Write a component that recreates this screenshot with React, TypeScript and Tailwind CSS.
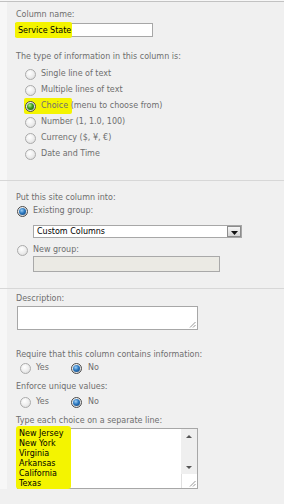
import React from "react";

function Radio({ state = "off" }: { state?: "off" | "blue" | "green" }) {
  if (state === "off") {
    return (
      <span className="inline-block w-[11px] h-[11px] rounded-full border border-[#ababab] bg-[radial-gradient(circle_at_40%_35%,#ffffff_0%,#eeeeee_50%,#d6d6d6_100%)] shrink-0" />
    );
  }
  const inner =
    state === "blue"
      ? "bg-[radial-gradient(circle_at_40%_35%,#9fd0f5_0%,#2b78c0_45%,#0d3a6b_100%)]"
      : "bg-[radial-gradient(circle_at_40%_35%,#b6f08a_0%,#3a9a20_45%,#135008_100%)]";
  return (
    <span className="inline-flex items-center justify-center w-[11px] h-[11px] rounded-full border border-[#4a4a4a] bg-[radial-gradient(circle_at_40%_35%,#ffffff_0%,#e4e4e4_60%,#bdbdbd_100%)] shrink-0">
      <span className={"block w-[7px] h-[7px] rounded-full " + inner} />
    </span>
  );
}

function Grip() {
  return (
    <svg width="7" height="7" viewBox="0 0 7 7" className="absolute right-[1px] bottom-[1px]">
      <line x1="6.5" y1="1" x2="1" y2="6.5" stroke="#8a8a8a" strokeWidth="0.9" />
      <line x1="6.5" y1="4" x2="4" y2="6.5" stroke="#8a8a8a" strokeWidth="0.9" />
    </svg>
  );
}

export default function App() {
  return (
    <div className="w-[284px] h-[504px] bg-[#f0f0f0] overflow-hidden font-['DejaVu_Sans',_Verdana,_sans-serif] text-[8px] leading-[10px] text-[#6e6e6e]">
      <div className="h-[1px] bg-[#f7f7f7]" />
      <div className="h-[1px] bg-[#c2c2c2]" />

      {/* Section 1 */}
      <div className="border-l-[7px] border-l-[#f7f7f7] pl-[9px] pb-[18px] flex flex-col">
        <div className="mt-[8px] h-[10px]">Column name:</div>
        <div className="relative mt-[3px] ml-[-1px] w-[138px] h-[14px] border border-[#a7a7a7] bg-white">
          <span className="absolute left-[-1px] top-[-2px] w-[57px] h-[16px] rounded-[2px] bg-[#f4f400]" />
          <span className="relative block pl-[2px] pt-[1px] text-black leading-[11px]">Service State</span>
        </div>
        <div className="mt-[15px] h-[10px]">The type of information in this column is:</div>
        <div className="mt-[4px] flex flex-col pl-[9px]">
          {[
            ["Single line of text", "off"],
            ["Multiple lines of text", "off"],
            ["Choice", "green"],
            ["Number (1, 1.0, 100)", "off"],
            ["Currency ($, \u00a5, \u20ac)", "off"],
            ["Date and Time", "off"],
          ].map(([label, st]) => (
            <div key={label} className="relative h-[16px] flex items-center gap-[5px]">
              {st === "green" && (
                <span className="absolute left-[-1px] top-[0px] w-[48px] h-[16px] rounded-[2px] bg-[#f4f400]" />
              )}
              <span className="relative flex items-center">
                <Radio state={st as "off" | "green"} />
              </span>
              <span className="relative">
                {st === "green" ? (
                  <>
                    Choice <span>(menu to choose from)</span>
                  </>
                ) : (
                  label
                )}
              </span>
            </div>
          ))}
        </div>
      </div>
      <div className="h-[1px] bg-[#d7d7d7]" />

      {/* Section 2 */}
      <div className="border-l-[7px] border-l-[#f7f7f7] pl-[9px] pb-[16px] flex flex-col">
        <div className="mt-[12px] h-[10px]">Put this site column into:</div>
        <div className="mt-[1px] h-[14px] flex items-center gap-[5px] pl-[1px]">
          <Radio state="blue" />
          <span>Existing group:</span>
        </div>
        <div className="mt-[7px] ml-[17px] w-[209px] h-[13px] border border-[#a7a7a7] bg-white flex items-center justify-between">
          <span className="pl-[3px] text-black">Custom Columns</span>
          <span className="w-[14px] h-[11px] border border-[#8c8c8c] bg-[linear-gradient(#f6f6f6,#d4d4d4)] flex items-end justify-center pb-[1px]">
            <svg width="7" height="4" viewBox="0 0 7 4">
              <polygon points="0,0 7,0 3.5,4" fill="#111" />
            </svg>
          </span>
        </div>
        <div className="mt-[6px] h-[12px] flex items-center gap-[5px] pl-[1px]">
          <Radio state="off" />
          <span>New group:</span>
        </div>
        <div className="ml-[17px] w-[187px] h-[16px] border border-[#a9a9a9] bg-[#ebeae4]" />
      </div>
      <div className="h-[1px] bg-[#d7d7d7]" />

      {/* Section 3 */}
      <div className="border-l-[7px] border-l-[#f7f7f7] pl-[9px] flex flex-col">
        <div className="mt-[5px] h-[10px]">Description:</div>
        <div className="relative mt-[2px] ml-[1px] w-[181px] h-[24px] border border-[#a7a7a7] bg-white">
          <Grip />
        </div>
        <div className="mt-[20px] h-[10px]">Require that this column contains information:</div>
        <div className="mt-[1px] h-[14px] flex items-center pl-[4px]">
          <Radio state="off" />
          <span className="ml-[5px]">Yes</span>
          <span className="ml-[22px] flex items-center">
            <Radio state="blue" />
          </span>
          <span className="ml-[6px]">No</span>
        </div>
        <div className="mt-[7px] h-[10px]">Enforce unique values:</div>
        <div className="mt-[3px] h-[14px] flex items-center pl-[4px]">
          <Radio state="off" />
          <span className="ml-[5px]">Yes</span>
          <span className="ml-[22px] flex items-center">
            <Radio state="blue" />
          </span>
          <span className="ml-[6px]">No</span>
        </div>
        <div className="mt-[7px] h-[10px]">Type each choice on a separate line:</div>
        <div className="relative mt-[2px] ml-[1px] w-[181px] h-[61px] border border-[#a7a7a7] bg-white">
          <span className="absolute left-[-2px] top-[-3px] w-[55px] h-[63px] rounded-[3px] bg-[#f4f400]" />
          <div className="relative flex flex-col pl-[1px] text-black leading-[10px]">
            <span>New Jersey</span>
            <span>New York</span>
            <span>Virginia</span>
            <span>Arkansas</span>
            <span>California</span>
            <span>Texas</span>
          </div>
          <div className="absolute right-0 top-0 bottom-0 w-[16px] flex flex-col">
            <div className="flex-1 bg-[#efefef] flex flex-col items-center justify-between pt-[6px] pb-[5px]">
              <svg width="6" height="3" viewBox="0 0 6 3">
                <polygon points="0,3 6,3 3,0" fill="#555" />
              </svg>
              <svg width="6" height="3" viewBox="0 0 6 3">
                <polygon points="0,0 6,0 3,3" fill="#555" />
              </svg>
            </div>
            <div className="relative h-[14px] bg-white border-l border-[#e0e0e0]">
              <Grip />
            </div>
          </div>
        </div>
      </div>
    </div>
  );
}
